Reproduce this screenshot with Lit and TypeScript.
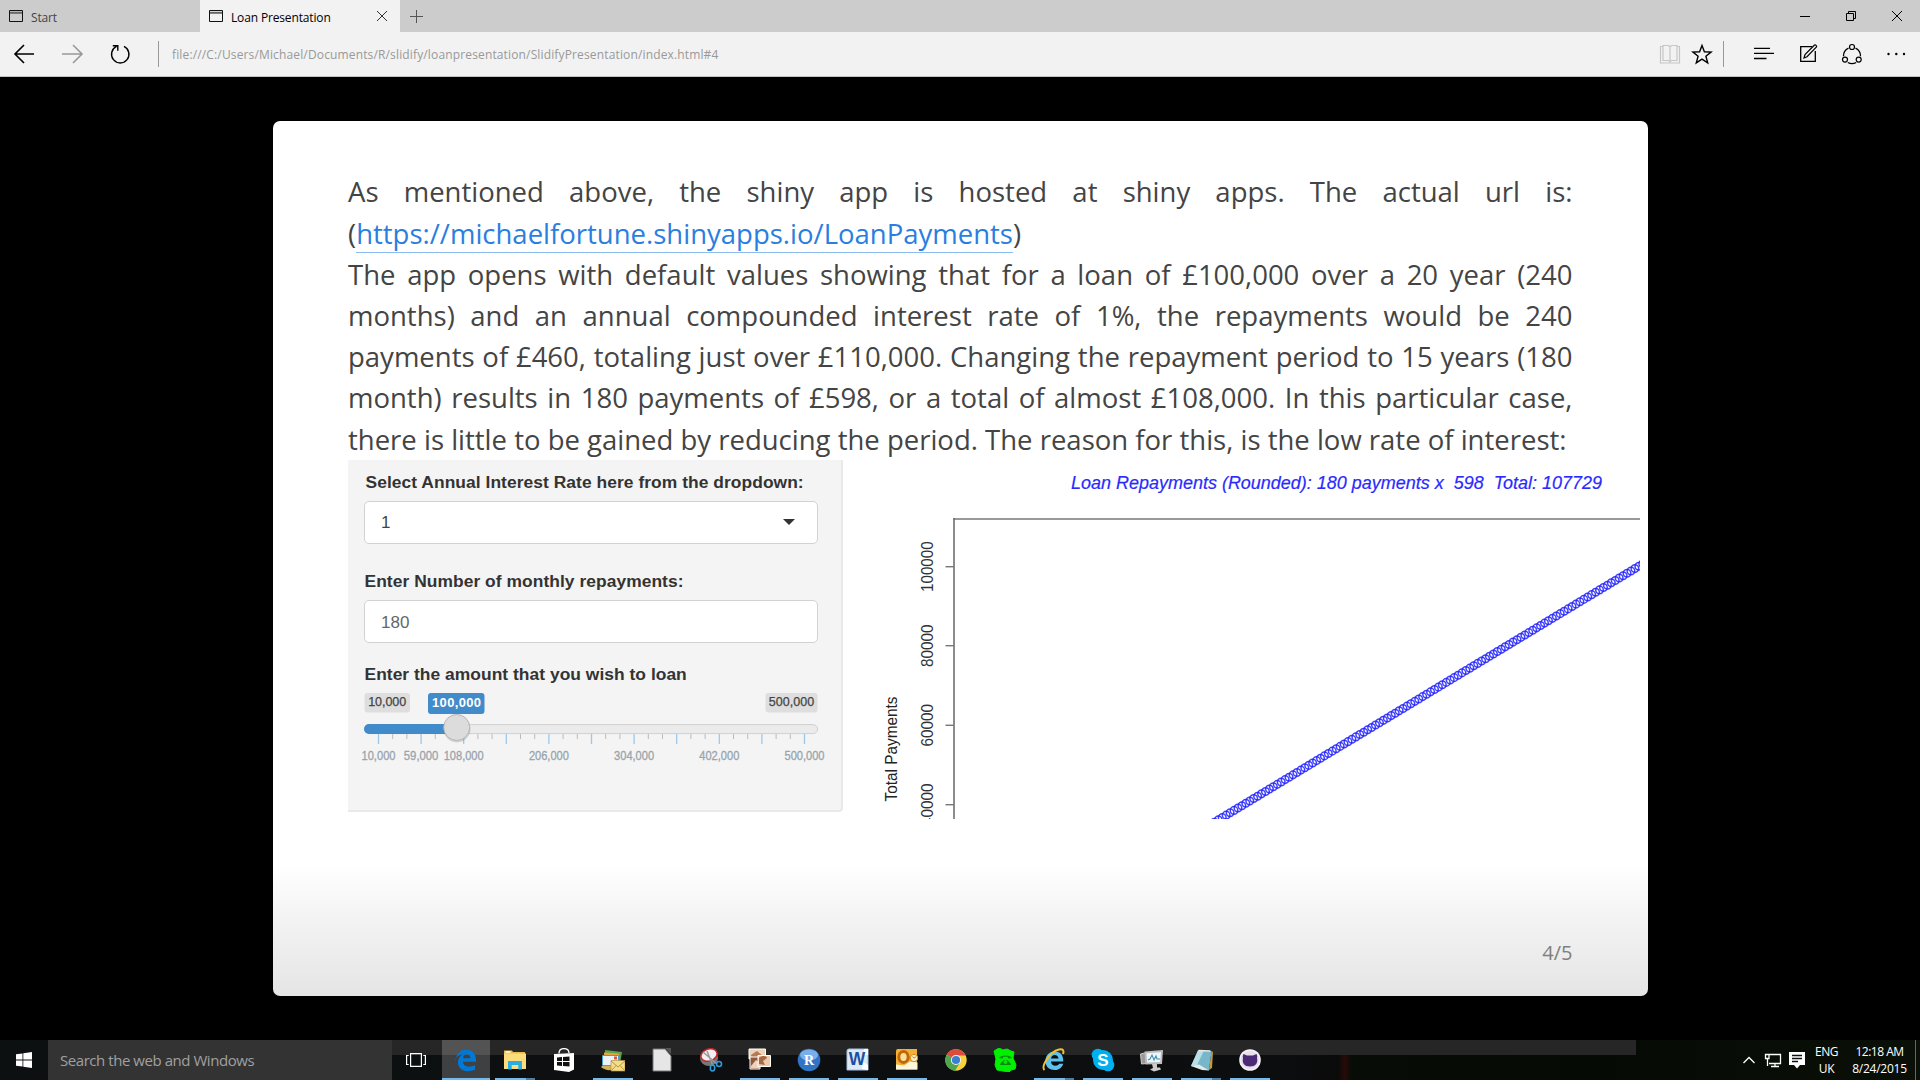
import { LitElement, html, css, svg, TemplateResult } from "lit";
import { customElement } from "lit/decorators.js";

const tabIcon = html`<svg class="tabicon" viewBox="0 0 14 14" width="14" height="14">
  <path d="M.5 1.5h13v11h-13z" fill="none" stroke="#111" /><path d="M1 3.8h12" stroke="#666" stroke-width="2" />
</svg>`;

@customElement("edge-chrome")
export class EdgeChrome extends LitElement {
  static styles = css`
    :host { display: block; font-family: "Open Sans", "Noto Sans", sans-serif; font-size: 12px; }
    svg { display: block; flex: none; }
    .tabs { display: flex; height: 32px; background: #ccc; color: #444; }
    .tab { display: flex; width: 200px; box-sizing: border-box; padding: 2px 0 0 9px; align-items: center; letter-spacing: -0.15px; }
    .tab.active { background: #f2f2f2; color: #000; }
    .tab .label { margin-left: 8px; flex: 1; white-space: nowrap; }
    .tabicon { margin-top: -2px; }
    .close { margin-right: 12px; margin-top: -2px; }
    .plus { margin: 10px 0 0 10px; }
    .window { margin-left: auto; }
    .bar { display: flex; height: 44px; background: #f2f2f2; border-bottom: 1px solid #c4c4c4; align-items: center; }
    .url { color: #999; letter-spacing: 0.145px; margin-left: 0; flex: 1; white-space: nowrap; }
  `;
  render() {
    return html`
      <div class="tabs">
        <div class="tab">${tabIcon}<span class="label">Start</span></div>
        <div class="tab active">${tabIcon}<span class="label">Loan Presentation</span>
          <svg class="close" width="12" height="12" viewBox="0 0 12 12"><path d="M1 1l10 10M11 1L1 11" stroke="#333" /></svg>
        </div>
        <svg class="plus" width="13" height="13" viewBox="0 0 13 13"><path d="M6.5 0v13M0 6.5h13" stroke="#555" /></svg>
        <svg class="window" width="120" height="32" viewBox="1800 0 120 32" fill="none" stroke="#000">
          <path d="M1800 16.5h10M1846.500 13.500h7v7h-7zM1848.500 13.500v-2h7v7h-2M1892 11l10 10M1902 11l-10 10" />
        </svg>
      </div>
      <div class="bar">
        <svg width="172" height="44" viewBox="0 32 172 44" fill="none" stroke-width="1.600">
          <path d="M34 54H15.500M24 45l-9 9 9 9" stroke="#000" />
          <path d="M62 54h19.500M73 45l9 9-9 9" stroke="#999" />
          <path d="M124 46.400a8.700 8.700 0 1 1-7.500 0M112.800 45.800h5v5" stroke="#000" stroke-width="1.400" />
          <path d="M158.500 41v26" stroke="#999" stroke-width="1" />
        </svg>
        <div class="url">file:///C:/Users/Michael/Documents/R/slidify/loanpresentation/SlidifyPresentation/index.html#4</div>
        <svg width="264" height="44" viewBox="1656 32 264 44" fill="none" stroke="#000" stroke-width="1.200">
          <g stroke="#c6c6c6"><path d="M1663 46.500h-2.500v16.500h19V46.500h-2.500M1663 45.500h5.500l1.500 1.500 1.500-1.500h5.500v15h-5.500l-1.500 1-1.500-1h-5.500zM1670 47v16" /></g>
          <path d="M1702 45.500l2.400 6.300 6.700.3-5.200 4.200 1.800 6.500-5.700-3.700-5.700 3.700 1.800-6.500-5.200-4.200 6.700-.3z" stroke-width="1.400" />
          <path d="M1723.500 41v26" stroke="#999" stroke-width="1" />
          <path d="M1754 48.300h16M1754 53.400h20M1754 58.500h12.500" stroke-width="1.300" />
          <path d="M1812 46.700h-11.300v14.600h14.600V51" stroke-width="1.300" /><path d="M1804 58l1-3.500 9.500-9.500c1-.6 2.600.8 2 2l-9.500 9.700z" />
          <path d="M1848.500 48.200a8.700 8.700 0 0 0-5 8M1855.500 48.200a8.700 8.700 0 0 1 5 8M1847.800 62.500a9 9 0 0 0 8.400 0" stroke-width="1.300" />
          <circle cx="1852" cy="47" r="2.500" /><circle cx="1845" cy="59.600" r="2.500" /><circle cx="1858.700" cy="59.600" r="2.500" />
          <g fill="#000" stroke="none"><circle cx="1888.500" cy="54" r="1.200" /><circle cx="1896.300" cy="54" r="1.200" /><circle cx="1904" cy="54" r="1.200" /></g>
        </svg>
      </div>`;
  }
}

@customElement("loan-form")
export class LoanForm extends LitElement {
  static styles = css`
    :host {
      display: block; box-sizing: border-box; width: 495px; height: 352px; padding: 12px 23px 0 16px;
      background: #f4f4f4; border: solid #e9e9e9; border-width: 0 2px 2px 0; border-radius: 0 0 4px 0;
      font-family: "Liberation Sans", Arial, sans-serif; font-size: 17px; color: #333;
    }
    .label { font-weight: bold; font-size: 17.4px; line-height: 20px; padding: 0 0 2px 0.5px; white-space: nowrap; }
    .l1 { letter-spacing: 0.06px; margin-left: 1px; }
    .l2 { margin-top: 27.5px; letter-spacing: 0.06px; }
    .l3 { margin-top: 20.5px; letter-spacing: 0.04px; }
    .box {
      display: flex; align-items: center; justify-content: space-between; box-sizing: border-box;
      width: 454px; height: 43px; margin-top: 7px; padding: 2px 22px 0 16px;
      background: #fff; border: 1.500px solid #d2d2d2; border-radius: 5px; color: #444;
    }
    .box.num { color: #666; }
    .caret { border: 6.500px solid transparent; border-top: 6px solid #333; border-bottom: 0; margin-top: -3px; }
    .slider { display: block; margin-top: 6px; overflow: visible; }
  `;
  render() {
    const ticks: TemplateResult[] = [];
    for (let i = 0; i <= 30; i++) {
      const x = 14.500 + i * 14.200;
      ticks.push(i % 3 === 0
        ? svg`<path d="M${x} 42v10" stroke="#9cc8ea" stroke-width="1.300"/>`
        : svg`<path d="M${x} 42v5" stroke="#bbb"/>`);
    }
    const labels: [number, string, number][] = [[0, "10,000", 34], [3, "59,000", 34.500], [6, "108,000", 40], [12, "206,000", 40], [18, "304,000", 40], [24, "402,000", 40], [30, "500,000", 40]];
    return html`
      <div class="label l1">Select Annual Interest Rate here from the dropdown:</div>
      <div class="box"><span>1</span><i class="caret"></i></div>
      <div class="label l2">Enter Number of monthly repayments:</div>
      <div class="box num"><span>180</span></div>
      <div class="label l3">Enter the amount that you wish to loan</div>
      <svg class="slider" width="454" height="80" viewBox="0 0 454 80" font-size="12.500">
        <rect x=".5" y="1" width="45.500" height="19.500" rx="3" fill="#dedede" />
        <text x="4.200" y="14.200" fill="#444" stroke="#444" stroke-width=".25" textLength="38">10,000</text>
        <rect x="401.500" y="1" width="52" height="19.500" rx="3" fill="#dedede" />
        <text x="404.700" y="14.200" fill="#444" stroke="#444" stroke-width=".25" textLength="45.500">500,000</text>
        <rect x="64" y="1" width="56.500" height="21" rx="3" fill="#428bca" />
        <text x="68" y="15.200" fill="#fff" font-weight="bold" font-size="13" textLength="49">100,000</text>
        <rect x=".6" y="32.600" width="453" height="9" rx="4.500" fill="#ebebeb" stroke="#d0d0d0" />
        <path d="M92 32H5a5 5 0 0 0 0 10h87z" fill="#428bca" />
        ${ticks}
        <circle cx="93" cy="37" r="13.500" fill="#000" opacity=".13" />
        <circle cx="92.700" cy="35.500" r="13" fill="#dcdcdc" stroke="#b4b4b4" />
        ${labels.map(([i, t, w]) => svg`<text x=${14.500 + i * 14.200} y="68" text-anchor="middle" fill="#99a4ac" stroke="#99a4ac" stroke-width=".3" font-size="12" textLength=${w} lengthAdjust="spacingAndGlyphs">${t}</text>`)}
      </svg>`;
  }
}

@customElement("loan-plot")
export class LoanPlot extends LitElement {
  static styles = css`
    :host { display: block; }
    .plot { display: block; font-family: "Liberation Sans", Arial, sans-serif; overflow: hidden; }
  `;
  render() {
    const points: TemplateResult[] = [];
    for (let n = 56; n <= 170; n++) {
      const x = 1640 + (n - 167.300) * 3.930;
      const y = 565.500 - (n - 167.300) * 2.371;
      points.push(svg`<circle cx=${x} cy=${y} r="3.800"/>`);
    }
    const ticks: [number, string, number][] = [[566.700, "100000", 50.500], [645.700, "80000", 42.600], [725.300, "60000", 42.600], [804.700, "40000", 42.600]];
    return html`<svg class="plot" width="797" height="359" viewBox="843 460 797 359">
      <text x="1071" y="488.700" font-size="19" font-style="italic" fill="#2a2aff" stroke="#2a2aff" stroke-width=".2" textLength="531" lengthAdjust="spacingAndGlyphs" xml:space="preserve">Loan Repayments (Rounded): 180 payments x  598  Total: 107729</text>
      <path d="M953.500 519H1640" stroke="#999" stroke-width="2" />
      <path d="M954 518V819" stroke="#666" stroke-width="1.500" />
      ${ticks.map(([y, t, w]) => svg`<path d="M945.500 ${y}h8.500" stroke="#777" stroke-width="1.400"/>
        <text transform="translate(933 ${y}) rotate(-90)" text-anchor="middle" font-size="16.500" fill="#333" textLength=${w} lengthAdjust="spacingAndGlyphs">${t}</text>`)}
      <text transform="translate(897 749) rotate(-90)" text-anchor="middle" font-size="16" fill="#222" textLength="105" lengthAdjust="spacingAndGlyphs">Total Payments</text>
      <g fill="none" stroke="#2020ff" stroke-width="1.500" stroke-opacity=".85">${points}</g>
    </svg>`;
  }
}

const apps: { name: string; run: string; art: TemplateResult }[] = [
  { name: "edge", run: "active", art: svg`<path d="M2 11.500C2.500 5 7 1.800 12 1.800c6 0 10 4 10 10v2H9c.3 3.500 3 4.800 6 4.800 2.200 0 4.200-.6 6-1.700v4.600c-2.200 1.200-4.600 1.700-7.300 1.700-5.900 0-9.700-3.400-9.700-8.900 0-3.500 1.800-6.200 5-8-3.500.3-6 1.700-8 5.200zM9 10.200h7.300c0-2.600-1.300-4-3.500-4-2 0-3.400 1.500-3.800 4z" fill="#0078d7"/>` },
  { name: "explorer", run: "multi", art: svg`<path d="M1 2.500h8l1 1.500h12v17H1z" fill="#e9b94a"/><path d="M1 5.500h22V21H1z" fill="#fbdc7d"/><path d="M2.500 3h5v2h-5z" fill="#fff3c4"/><path d="M5 21.500V13h14v8.500h-3.700V17H8.700v4.500z" fill="#27aee6"/>` },
  { name: "store", run: "", art: svg`<path d="M2 6l20-1v16.500L17 24 2 22z" fill="#fff"/><path d="M7 5.500C7 2 8.500.6 12 .6s5 1.400 5 4.500" fill="none" stroke="#fff" stroke-width="1.300"/><path d="M5 9.500l5-.4v4H5zM11 9l6.500-.5v4.600H11zM5 14h5v4l-5-.4zM11 14h6.500v4.600L11 18z" fill="#111"/>` },
  { name: "mail", run: "run", art: svg`<path d="M4 2l17 2-2 12H4z" fill="#58a84a"/><path d="M3 4.500l15 1-1 12H3z" fill="#e9a13b"/><path d="M1.500 7.500h16v10h-16z" fill="#eaf3fa" stroke="#4b9bd0"/><path d="M13 8.500h3v3h-3z" fill="#d35b3a"/><path d="M0 19c5 4 10 4 14 1v-2H1z" fill="#d4b057"/><path d="M10 12.500h14v10.500H10z" fill="#f4dd8b" stroke="#b89544" stroke-width=".7"/><path d="M10 13l7 6 7-6M10 23l5-5.500M24 23l-5-5.500" fill="none" stroke="#b89544"/>` },
  { name: "office", run: "", art: svg`<path d="M3 1h12l6 7v15H3z" fill="#e6e6e6" stroke="#777"/><path d="M15 0h6v6z" fill="#555"/>` },
  { name: "snip", run: "", art: svg`<ellipse cx="10" cy="10" rx="9" ry="8" fill="#777"/><ellipse cx="10" cy="7" rx="8.300" ry="6" fill="#f3eef0" stroke="#c4222b" stroke-width="1.500" transform="rotate(-20 10 7)"/><path d="M4 4l14 12M8 3l6 15" stroke="#999" stroke-width="1.500"/><circle cx="20" cy="16" r="2.500" fill="none" stroke="#2f9bd8" stroke-width="1.600"/><ellipse cx="13.500" cy="20" rx="2.200" ry="3" fill="none" stroke="#2f9bd8" stroke-width="1.600"/>` },
  { name: "photos", run: "run", art: svg`<path d="M1 1h16.500v10H1z" fill="#ead2bb" stroke="#fff"/><path d="M3 7l6-4 7 6v4H4z" fill="#b57a52"/><path d="M2 9h10v12H2z" fill="#8d5a40" stroke="#fff"/><path d="M3 18l5-6 4 3v5H3z" fill="#f2d0b5"/><path d="M10 7.500h12.500v11H10z" fill="#efc9a8" stroke="#fff"/><path d="M11 10c3-3 8-2 8 0l-4 3 2 4-6-1z" fill="#a5694a"/>` },
  { name: "rstudio", run: "run", art: svg`<circle cx="12" cy="12" r="11.300" fill="#3274c4"/><ellipse cx="12" cy="7" rx="9" ry="5.500" fill="#78aeea"/><text x="12" y="16.800" text-anchor="middle" font-family="Liberation Serif, serif" font-weight="bold" font-size="14" fill="#fff">R</text>` },
  { name: "word", run: "run", art: svg`<path d="M1 3q0-2 2-2h19v21H1z" fill="#dce9f8" stroke="#a3c0e4"/><path d="M18 1h4v6h-4zM17 14l5 3v5l-6-1z" fill="#fff"/><text x="11" y="16.500" text-anchor="middle" font-family="Liberation Sans, sans-serif" font-weight="bold" font-size="17.500" fill="#1c4f9f">W</text>` },
  { name: "outlook", run: "run", art: svg`<path d="M1 3q0-2 2-2h19v20.500H1z" fill="#f3b13a"/><path d="M1 21.500v-5l8 1 6-4 7.500 1v7z" fill="#fff5dc"/><ellipse cx="8.500" cy="9" rx="4.700" ry="5.400" fill="#fbdf9c" stroke="#c26708" stroke-width="3"/><circle cx="19" cy="10" r="3.700" fill="#fff0c8" stroke="#d98a18"/><path d="M17.500 8.500l1.500 1.700 2-1.500" fill="none" stroke="#b1660c" stroke-width=".8"/>` },
  { name: "chrome", run: "", art: svg`<circle cx="12" cy="12" r="10.700" fill="#f9d13d"/><path d="M12 12L2.700 6.700A10.700 10.700 0 0 1 21.700 7.500H12z" fill="#dd4b3e"/><path d="M12 12L2.700 6.700a10.700 10.700 0 0 0 8.400 16l5-8.400z" fill="#4ea64e"/><circle cx="12" cy="12" r="5.100" fill="#f4f4f4"/><circle cx="12" cy="12" r="4.100" fill="#3c7fd0"/>` },
  { name: "phone", run: "", art: svg`<path d="M1 3l5-3 4 2 4-1 4 2 3 1-1 6 3 7-1 4-4 1-2 2-6-1-6-1-2-5 1-6z" fill="#00f000" stroke="#00f000" stroke-linejoin="round"/><path d="M6 10c1-3.500 12-3.500 13 0l-3.500.5-1-1.700h-4l-1 1.700zM7 17c.8-3.500 2.600-3 3.600-5h4c1 2 2.600 1.500 3.400 5z" fill="#0b8a12"/><circle cx="12.500" cy="14" r="2" fill="#0be00b"/>` },
  { name: "ie", run: "multi", art: svg`<path d="M3.500 14C3 8 7 3.500 12.500 3.500c6 0 9 4 8.800 10H9c.3 3 2 4.200 4.500 4.200 1.800 0 3-.7 3.800-2h4c-1.500 4-4.500 6.300-8.500 6.300-5.300 0-9-3-9.300-8zM9 10.500h7.500c-.3-2.300-1.500-3.500-3.700-3.500S9.400 8.200 9 10.500z" fill="#5cc3f1"/><path d="M2.500 22C-1 19 7 4 17 1.500c4.500-1 5 1.500 4 4.500" fill="none" stroke="#f2c02e" stroke-width="2"/>` },
  { name: "skype", run: "run", art: svg`<circle cx="12" cy="12" r="10" fill="#00aff0"/><circle cx="7" cy="7" r="6.300" fill="#00aff0"/><circle cx="17" cy="17" r="6.300" fill="#00aff0"/><text x="12" y="18" text-anchor="middle" font-family="Liberation Sans, sans-serif" font-weight="bold" font-size="17" fill="#fff">S</text>` },
  { name: "perf", run: "run", art: svg`<path d="M.5 6l6-1.500v11l-5 .5z" fill="#999" stroke="#ccc"/><path d="M4.500 3.500L23 2l-1 14-16.500.500z" fill="#bdbdbd"/><path d="M6.500 5.300l14.500-1-.8 9.700-13 .5z" fill="#eef6fb"/><path d="M8 12l2-1 2-4 2 5 2-4 1 3h3" fill="none" stroke="#3d8fb5" stroke-width="1.100"/><path d="M12 16h5v3.500h3l1 2-7 2-4-2 3-1.500z" fill="#ccc"/>` },
  { name: "notepad", run: "multi", art: svg`<path d="M22.500 3L24 4l-1 16-3 2z" fill="#c49a3e"/><path d="M9 2.500L22.500 3 20 22.500 2 18z" fill="#78b7c9"/><path d="M9 2.500h6L8 17l-6 1z" fill="#b9dfe6"/><path d="M2 18l8-1.500 10 6-7-.5z" fill="#dfe9ea"/><path d="M9.500 2.500l12 .5" stroke="#e8e8e8" stroke-width="1.500"/>` },
  { name: "github", run: "run", art: svg`<circle cx="12" cy="12" r="10.800" fill="#f5f2f7"/><circle cx="12" cy="12" r="9.300" fill="#e7dfec"/><path d="M5.500 6l3.500 1.500h6L18.500 6c1 2 .8 3 .5 4 1.200 5-1.500 8.500-7 8.500S3.800 15 5 10c-.4-1-.5-2 .5-4z" fill="#4b2a76"/>` },
];

@customElement("win-taskbar")
export class WinTaskbar extends LitElement {
  static styles = css`
    :host {
      display: flex; height: 40px; color: #fff; font-family: "Open Sans", "Noto Sans", sans-serif; font-size: 12px;
      background: linear-gradient(90deg, #0d1011 0, #0c0d0f 1290px, #0a0a0a 1338px, #280b08 1345px, #080c06 1351px, #060a05 1600px, #0a0f07 100%);
    }
    svg { display: block; flex: none; }
    .start { width: 48px; display: flex; align-items: center; justify-content: center; }
    .search { box-sizing: border-box; width: 344px; padding: 0 12px; background: #333; color: #a0a0a0; font-size: 15px; line-height: 41px; letter-spacing: -0.45px; white-space: nowrap; }
    .apps { display: flex; width: 1244px; background: linear-gradient(#262626 15px, transparent 15px); }
    .task { width: 49px; height: 40px; display: flex; align-items: center; justify-content: center; box-sizing: border-box; padding-right: 2px; }
    .app { width: 49px; height: 40px; display: flex; flex-direction: column; align-items: center; justify-content: space-between; box-sizing: border-box; padding-top: 8px; }
    .mark { width: 40px; height: 2px; }
    .run .mark { background: #76b9ed; }
    .multi .mark { background: linear-gradient(90deg, #76b9ed 31px, #4f7c9f 31px); }
    .active { width: 48px; margin: 0 0 0 1px; background: linear-gradient(#535353 15px, #3e4042 15px); }
    .active .mark { width: 48px; background: #76b9ed; }
    .tray { display: flex; margin-left: auto; }
    .stack { display: flex; flex-direction: column; align-items: center; line-height: 17px; padding-top: 3px; white-space: nowrap; }
    .lang { width: 30px; letter-spacing: -0.4px; }
    .clock { width: 60px; margin-left: 8px; letter-spacing: -0.5px; }
    .date { letter-spacing: -0.25px; }
    .edge { width: 4px; margin-left: 5.5px; border-left: 1px solid #666; }
  `;
  render() {
    return html`
      <div class="start"><svg width="16" height="16" viewBox="0 0 16 16"><path d="M0 2.300l6.500-.9v6.100H0zM7.300 1.200L16 0v7.500H7.300zM0 8.400h6.500v6.100L0 13.700zM7.300 8.400H16V16l-8.700-1.200z" fill="#fff" /></svg></div>
      <div class="search">Search the web and Windows</div>
      <div class="apps">
        <div class="task"><svg width="20" height="14" viewBox="0 0 20 14"><path d="M4.600.6h10.800v12.800H4.600zM2.700 2.500H.6v9h2.100M17.300 2.500h2.100v9h-2.100" fill="none" stroke="#fff" stroke-width="1.200" /></svg></div>
        ${apps.map((a) => html`<div class="app ${a.run}"><svg width="24" height="24" viewBox="0 0 24 24">${a.art}</svg><div class="mark"></div></div>`)}
      </div>
      <div class="tray">
        <svg width="70" height="40" viewBox="1742 1040 70 40" fill="none" stroke="#fff" stroke-width="1.300">
          <path d="M1743.500 1063l5.500-5.500 5.500 5.500" />
          <path d="M1769.500 1054.500h11v9h-11.500M1775 1063.500v3M1771 1066.500h8M1765.500 1054.500h3.500v4h-3.500zM1767.500 1058.500v7.500" />
          <path d="M1789 1052h16v13h-5l-3 3.500-3-3.500h-5z" fill="#fff" stroke="none" /><path d="M1792 1055.500h10M1792 1058.500h10M1792 1061.500h6" stroke="#111" />
        </svg>
        <div class="stack lang"><span>ENG</span><span>UK</span></div>
        <div class="stack clock"><span>12:18 AM</span><span class="date">8/24/2015</span></div>
        <div class="edge"></div>
      </div>`;
  }
}

@customElement("app-root")
export class AppRoot extends LitElement {
  static styles = css`
    :host { display: flex; flex-direction: column; width: 1920px; height: 1080px; background: #000; overflow: hidden; font-family: "Open Sans", "Noto Sans", sans-serif; }
    .stage { flex: 1; display: flex; justify-content: center; align-items: flex-start; padding-top: 44px; }
    .slide {
      display: flex; flex-direction: column; box-sizing: border-box; width: 1374.500px; height: 874.700px; margin-left: 0.5px;
      padding: 50px 0 0 75px; border-radius: 7px; color: #444;
      background: linear-gradient(#fff 744px, #f1f1f1 808px, #e5e5e5 100%);
    }
    .text { width: 1224.500px; font-size: 27.5px; line-height: 41.270px; }
    .para { margin: 0; text-align: justify; }
    .intro { line-height: 41.900px; margin-bottom: -1.260px; }
    .link { color: #2a7ee0; text-decoration: none; padding-bottom: 1px; background: linear-gradient(#8cbcf0, #8cbcf0) 0 100% / 100% 1px no-repeat; }
    .media { display: flex; align-items: flex-start; }
    .page { width: 1224.500px; text-align: right; margin-top: 120px; font-size: 20px; line-height: 28px; color: #808080; }
  `;
  render() {
    return html`
      <edge-chrome></edge-chrome>
      <main class="stage">
        <section class="slide">
          <div class="text">
            <p class="para intro">As mentioned above, the shiny app is hosted at shiny apps. The actual url is: (<a class="link">https://michaelfortune.shinyapps.io/LoanPayments</a>)</p>
            <p class="para">The app opens with default values showing that for a loan of £100,000 over a 20 year (240 months) and an annual compounded interest rate of 1%, the repayments would be 240 payments of £460, totaling just over £110,000. Changing the repayment period to 15 years (180 month) results in 180 payments of £598, or a total of almost £108,000. In this particular case, there is little to be gained by reducing the period. The reason for this, is the low rate of interest:</p>
          </div>
          <div class="media"><loan-form></loan-form><loan-plot></loan-plot></div>
          <div class="page">4/5</div>
        </section>
      </main>
      <win-taskbar></win-taskbar>`;
  }
}
